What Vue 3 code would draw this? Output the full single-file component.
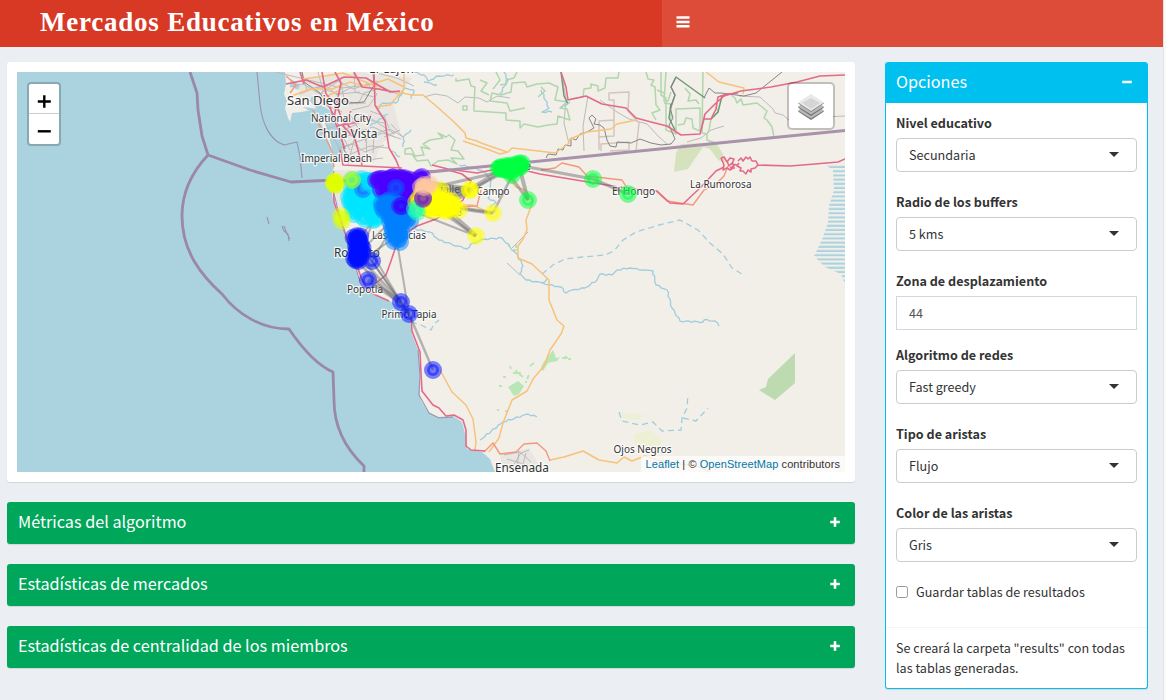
<script setup>
import { ref } from 'vue'

const fields = ref([
  { label: 'Nivel educativo', value: 'Secundaria', type: 'select' },
  { label: 'Radio de los buffers', value: '5 kms', type: 'select' },
  { label: 'Zona de desplazamiento', value: '44', type: 'text' },
  { label: 'Algoritmo de redes', value: 'Fast greedy', type: 'select' },
  { label: 'Tipo de aristas', value: 'Flujo', type: 'select' },
  { label: 'Color de las aristas', value: 'Gris', type: 'select' },
])
const panels = ['Métricas del algoritmo', 'Estadísticas de mercados', 'Estadísticas de centralidad de los miembros']

const places = [
  ['San Diego', 287, 105, 62, 12.9],
  ['National City', 311, 121.5, 60, 10.2],
  ['Chula Vista', 315.5, 138, 62, 12.3],
  ['Imperial Beach', 301, 162, 71, 10.2],
  ['Rosarito', 334, 257, 46, 12],
  ['Las Delicias', 372, 239, 54, 10],
  ['Popotla', 347, 292.5, 36, 10.2],
  ['Primo Tapia', 381.5, 318, 55, 10.3],
  ['Tecate', 495, 170, 36, 12],
  ['El Refugio', 422, 216, 40, 9.5],
  ['Valle', 437, 193, 23, 10],
  ['Campo', 476.5, 195, 33, 10.2],
  ['El Hongo', 612, 194.5, 43, 10.2],
  ['La Rumorosa', 690, 187.5, 61.5, 10.2],
  ['Ojos Negros', 613.5, 453, 58, 10.2],
  ['Ensenada', 495, 471.5, 54, 12],
  ['El Cajon', 369, 72.7, 45, 12],
]

const greys = [
  'M275 72 342 88 375 84 402 96M290 87 303 84 320 94 338 81 353 89 378 81M302 72 307 90 325 85 337 95 356 85M318 72 323 90 320 103 342 112M340 78 345 104 366 103M354 72 355 92 374 97M300 94 317 87 339 94 360 92M377 73 397 78 414 86M365 82 377 94 369 106 352 110',
  'M325 122 341 151M333 119 350 150M343 116 359 149M351 116 367 143M337 133 370 118 395 134M339 139 373 127 395 137M342 147 383 133 401 139M346 156 370 146 388 148M325 129 363 119 384 123M354 140 348 164M366 135 367 163M374 132 373 153M384 137 400 130M391 124 403 137',
  'M325 93 330 101 346 101 358 104 364 93 384 87M340 120 349 132 363 130 374 134 390 129 403 137M338 149 353 144 365 152 384 145M345 157 367 160 383 158M370 111 384 116 389 128',
  'M424 97 435 94 447 96 458 103 465 97 479 98 487 102 497 96 510 98M563 82 566 99 564 123 569 144M588 96 583 126 584 151M600 100 617 112 629 119 647 124 659 137 667 144M687 142 701 138 711 130 724 126M739 96 760 97 773 109 775 113 783 115 790 121 804 122M824 117 845 116',
  'M507 263 520 275M528 232 512 248M504 455 520 452 531 462M513 466 521 453 529 450M507 459 537 468M519 451 517 469M526 453 521 471',
]
const reds = [
  'M286 84 306 80 323 87 344 77 366 78 390 92 400 91M300 72 304 84M322 72 326 94 337 106 341 117 354 132M335 72 341 83 337 102 334 118M354 72 362 87 378 89 393 92M374 72 375 105 378 110 385 121 387 135 389 148 396 160 400 170M319 97 330 107 336 124 345 149M351 111 343 126 355 139 362 165M336 126 354 123 372 115M340 150 343 165 402 168',
  'M333 181 334 202 341 222 348 242 355 260 362 280 369 292 389 301M376 283 386 275 391 261 396 246 404 235 417 226 436 219 453 208 463 200 471 181 462 174 448 170 427 171M432 165 448 169 477 173 492 170 511 167 540 174 576 180 619 187 657 191 670 203 683 204 701 187 716 171 724 167',
  'M561 72 566 87 568 100 586 96 602 104 626 108 636 118 655 123 667 126 681 135 700 134 705 114 715 104 724 96 741 91 771 87 797 82 820 76 845 75M700 134 704 119 711 119 716 109 718 97 727 94 738 93',
  'M411 318 412 331 420 352 421 373 422 391 433 405 439 408 446 416 454 415 463 420 466 430 466 446 471 450 485 451',
  'M757 165 790 166 815 164 838 162 845 159M721 158 724 157 727 162 730 158 734 159 732 164 737 165M738 161 741 158 743 161 746 157 748 159 750 157 752 161 756 161 758 165 755 168 751 169 751 172 748 170 746 174 743 171 740 171 741 168 737 166 739 163M721 158 724 165 723 170 727 168 730 170 733 168 735 168M727 161 729 166 732 163 734 166 730 168',
]
const oranges = [
  'M392 91 412 95 423 95 435 105 453 121 465 133 466 138 477 141 481 143 507 152',
  'M292 96 310 89 332 89 350 82 366 86 388 79 404 87M302 79 325 76 343 73 378 87M321 99 338 91M404 72 404 89 390 105 375 107',
  'M463 141 487 149 500 154 508 152 512 148 530 150 555 153 568 144 570 139 587 132 611 129 617 124 636 120',
  'M706 72 719 82 744 88 743 94M463 205 473 205 489 213M508 178 516 187 525 190 533 201 529 212 526 220 527 230 523 239 518 246 518 258 532 264 549 280 549 300 557 320 564 326 561 334 550 350 544 366 533 379 527 391 512 400 503 423 499 438 489 452',
  'M440 370 452 392 466 405 473 419 476 442 475 450M550 460 564 457 583 451 599 460 617 463 624 457 632 461 645 456 657 460 700 467 710 472',
]
// Adds small bends to an absolute polyline path, so that rivers meander
function meander(d) {
  return d.split('M').filter(Boolean).map((part) => {
    const n = part.trim().split(/\s+/).map(Number)
    let out = `M${n[0]} ${n[1]}`
    let k = n[0]
    for (let i = 2; i < n.length; i += 2) {
      const x0 = n[i - 2], y0 = n[i - 1], x1 = n[i], y1 = n[i + 1]
      const len = Math.hypot(x1 - x0, y1 - y0)
      const steps = Math.max(1, Math.round(len / 3))
      for (let s = 1; s < steps; s++) {
        k++
        const off = Math.sin(k * 2.3) * 0.8
        const t = s / steps
        out += ` ${(x0 + (x1 - x0) * t - (y1 - y0) / len * off).toFixed(1)} ${(y0 + (y1 - y0) * t + (x1 - x0) / len * off).toFixed(1)}`
      }
      out += ` ${x1} ${y1}`
    }
    return out
  }).join('')
}
const waters = [
  'M377 110 383 103 396 103 405 88 414 90M370 126 388 114M403 147 404 136 411 130M400 157 392 151M411 99 414 90M414 72 424 75 428 81 439 76 454 75',
  'M424 82 437 85M459 165 476 168 484 172 490 178 491 190 495 192M492 190 488 198 496 202 490 208',
  'M415 229 430 232 439 240 457 246 467 249 473 243 485 239 502 238 510 247 518 256 523 266 520 273 526 280 542 283 547 279',
  'M540 282 549 285 561 287 566 293 572 290 585 288 597 280 600 274 612 275 617 270 630 268 643 270 653 271 656 285 667 290 672 308 680 321 703 322 704 320 715 321 719 326',
  'M480 440 503 422 528 414 537 417M541 90 549 108 542 112 552 112M561 108 570 102M504 72 508 80 500 94',
].map(meander)
const dashed = [
  'M542 274 553 265 565 259 582 257 605 255 614 251 623 240 636 232 659 225 680 220 698 230 710 243 723 254 732 268 742 274',
  'M411 322 421 325 431 330 434 324 439 320',
  'M619 412 622 421 640 425 653 422 662 431 681 430 682 418 687 408 688 394M683 418 696 421 708 408',
]
const greens = [
  'M405 149 411 148 415 156 424 155 421 147 430 149 423 144 430 140 443 138 438 133 446 137 449 135 455 140 451 150 458 151 464 159 451 158 457 164 448 160 438 161 431 166 428 160 417 161 412 154 405 154Z',
  'M456 78 456 81 469 79 471 86 475 87 474 103 474 111 506 113 506 120 520 121 520 128 524 124 538 127 548 125 557 124 558 116 570 120 567 109 560 108 567 102 555 100 558 87 549 83 537 84 527 87 525 82 512 83 511 92 501 95 492 93 490 101 507 103 510 111 525 108',
  'M500 85 506 84 506 80 514 78 517 72M496 72 500 80 493 89M570 99 583 97 584 89 591 88 591 84 598 86 598 91 605 88 606 78 618 78 619 72M646 72 648 79 654 80 651 85 655 87 656 105 660 110 652 113 656 120M661 72 661 95 666 98 666 130 676 134 676 109 700 108 700 131 693 128 692 119 686 118 684 124 678 125',
  'M666 72 664 101 668 101 671 92M703 72 702 133 707 134M685 88 690 94 688 101 696 100 699 104M657 90 664 93 M664 103 671 104 671 120',
  'M707 134 707 140 715 143 774 137 772 127 767 120 764 118 767 111 757 103 743 105 741 99 737 103 735 98 731 95M716 106 718 112 711 119 709 130 707 134',
  'M480 80 487 83 481 91 489 95M538 97 545 91 541 87M463 106h4v4h-4Z',
]

// Sunflower spread used for the dense groups of schools
function scatter(color, cx, cy, rx, ry, n) {
  const out = []
  for (let i = 0; i < n; i++) {
    const a = i * 2.39996
    const r = Math.sqrt((i + 0.5) / n)
    out.push([cx + Math.cos(a) * r * rx, cy + Math.sin(a) * r * ry, color])
  }
  return out
}
const markers = [
  [362, 216, '#00e5ff'], [365, 219, '#00e5ff'], [373, 220, '#00e5ff'], [378, 216, '#00e5ff'], [372, 214, '#00e5ff'], [375, 219, '#00e5ff'],
  ...scatter('#00e5ff', 357, 200, 7, 12, 16),
  ...scatter('#00e5ff', 363, 187, 12, 9, 20),
  ...scatter('#00e5ff', 370, 202, 15, 9, 20),
  [349, 197, '#00e5ff'], [350, 202, '#00e5ff'], [354, 214, '#00e5ff'],
  [363, 189, '#2060ff'], [371, 184, '#00e5ff'], [367, 181, '#00e5ff'],
  ...scatter('#4c00ff', 378, 179, 3, 2, 2),
  ...scatter('#4c00ff', 397, 187, 14, 11, 34),
  ...scatter('#4c00ff', 395, 180, 17, 3, 18),
  ...scatter('#4c00ff', 405, 201, 6, 9, 9),
  [381, 190, '#4c00ff'], [420, 178, '#4c00ff'], [422, 177, '#4c00ff'],
  ...scatter('#0080ff', 398, 216, 10, 10, 24),
  ...scatter('#0080ff', 390, 206, 11, 6, 17),
  ...scatter('#0080ff', 397, 231, 6, 8, 13),
  [394, 241, '#0080ff'], [400, 242, '#0080ff'], [396, 188, '#0060ff'], [410, 221, '#0080ff'],
  [400, 206, '#4c00ff'], [402, 206, '#3000ff'],
  ...scatter('#ffff00', 437, 204, 17, 7, 30),
  ...scatter('#ffff00', 448, 207, 8, 5, 8),
  ...scatter('#ffff00', 427, 199, 13, 9, 12),
  [441, 190, '#ffff00'], [470, 190, '#ffff00'], [470, 190, '#ffff00'], [459, 210, '#ffff00'], [493, 213, '#ffff00'], [476, 236, '#ffff00'],
  [417, 212, '#20ffb0'], [415, 209, '#20ffb0'],
  [423, 198, '#4c00ff'], [422, 181, '#4c00ff'],
  [424, 185, '#ffc8a0'], [427, 188, '#ffc8a0'], [421, 187, '#ffc8a0'], [430, 184, '#ffc8a0'],
  [423, 199, '#7a30aa'], [424, 187, '#ffc8a0'],
  ...scatter('#e0ff00', 335, 183, 1.5, 3, 5),
  [341, 216, '#e0ff00'], [342, 221, '#e0ff00'],
  [352, 180, '#40e0a0'], [352, 180, '#b0ff20'],
  ...scatter('#0010ff', 357, 238, 4, 3, 6),
  ...scatter('#0010ff', 359, 250, 4, 9, 16),
  ...scatter('#0010ff', 357, 259, 3, 3, 5),
  [372, 261, '#0010ff'], [368, 280, '#0010ff'], [401, 302, '#0010ff'], [409, 314, '#0010ff'], [433, 370, '#0010ff'],
  ...scatter('#00ff40', 500, 168, 3, 1, 4),
  ...scatter('#00ff40', 508, 168, 7, 3, 12),
  ...scatter('#00ff40', 519, 165, 4, 3, 7),
  [512, 175, '#00ff40'], [528, 200, '#00ff40'], [593, 179, '#00ff40'], [628, 194, '#00ff40'],
]
const edges = [
  [358, 256, 401, 302, 3], [362, 248, 401, 302, 2], [372, 261, 409, 314, 2], [368, 280, 401, 302, 5], [358, 262, 409, 314, 3], [364, 240, 401, 302, 2],
  [397, 242, 409, 314, 2], [409, 314, 433, 370, 2.5], [401, 302, 409, 314, 3],
  [360, 252, 392, 220, 2], [362, 260, 397, 236, 2], [372, 261, 393, 226, 2], [358, 238, 380, 215, 2], [366, 240, 374, 218, 2],
  [440, 204, 476, 236, 5], [425, 200, 476, 236, 3], [415, 212, 476, 236, 2], [450, 207, 493, 213, 4], [437, 205, 493, 213, 2],
  [423, 183, 470, 190, 6], [440, 205, 470, 190, 8], [435, 195, 470, 190, 10], [430, 188, 500, 172, 3],
  [470, 190, 503, 169, 5], [476, 187, 512, 168, 3], [493, 213, 513, 174, 2.5], [519, 166, 528, 200, 4], [505, 169, 528, 200, 3],
  [517, 165, 593, 179, 3], [593, 179, 628, 194, 3],
]
</script>

<template>
  <div class="page">
    <header class="topbar">
      <div class="brand">Mercados Educativos en México</div>
      <nav class="nav">
        <svg class="burger" width="14" height="12" viewBox="0 0 14 12"><path d="M.5 1.5h13M.5 6h13M.5 10.3h13" /></svg>
      </nav>
    </header>

    <main class="content">
      <section class="left">
        <div class="box mapbox">
          <div class="map">
            <svg class="tiles" viewBox="17 72 828 400" width="828" height="400">
              <defs>
                <pattern id="hatch" width="6" height="4.2" y="165.5" patternUnits="userSpaceOnUse"><path d="M0 1.5H6" stroke="#aad3df" stroke-width="2" /></pattern>
              </defs>
              <rect x="17" y="72" width="828" height="400" fill="#aad3df" />
              <path class="land" d="M285 72 286 84 284 94 287 101 285 108 288 118 290 122 292 113 301 112 312 110 319 118 325 132 330 145 333 159 334 167 331 178 332 195 338 217 346 239 353 258 359 281 368 293 380 297 392 302 403 309 410 320 412 334 418 350 420 375 419 390 421 401 428 412 437 417 453 416 462 422 466 437 467 449 482 452 490 459 495 472H845V72Z" />
              <path class="urban" d="M297 80 360 72 412 78 393 103 400 130 381 144 374 163 341 163 330 129 318 104 300 99ZM334 170 385 170 421 183 409 211 370 227 337 205ZM500 455 529 448 542 471 503 471Z" />
              <path class="bay" d="M312 96 318 104 328 109 334 116 336 127 341 139 343 155 334 163 331 145 324 119 316 108 310 101ZM291 79 300 85 298 90 290 86ZM303 107 319 109 322 118 313 113Z" />
              <path class="field" d="M681 144 707 143 715 141 723 154 725 163 718 160 710 149 703 147 688 169 674 172 676 153Z" />
              <path class="olive" d="M620 412 645 415 638 420 624 419ZM634 434 650 430 664 441 655 451 635 446Z" />
              <path class="park" d="M759 390 766 387 768 379 795 353V383L775 400Z" />
              <path class="grove" d="M508 387 518 381 524 386 519 394 514 396ZM543 363 553 350 556 358 560 357 557 361 548 363 543 371 541 368Z" />
              <path class="shrubs" d="M510 366l1 3M503 377h3M499 386h3M513 373h8M517 370l-2 4M519 374l4 3M527 379l2-4M525 382h2M530 366l4-3M562 358h5l-2-2M568 359h3M498 409v2M505 411h2M509 244v3M513 250h4M516 244v4" />
              <path fill="url(#hatch)" d="M826 165H845V284L841 274 825 267 814 256 822 240 828 223 829 206 834 190 833 170Z" />

              <path v-for="d in greys" :key="d" :d="d" class="grey" />
              <path v-for="d in greens" :key="d" :d="d" class="green" />
              <path class="green dark" d="M670 110 675 95 671 87 676 77 705 98M671 104 669 118 675 130M722 96 718 112 711 119M561 72 564 96 568 104" />
              <path v-for="d in waters" :key="d" :d="d" class="water" />
              <path v-for="d in dashed" :key="d" :d="d" class="water dash" />
              <path class="brown" d="M610 151 629 150 629 142 601 144 601 151M599 150 599 121 614 120 614 100 609 100 609 93 629 92 628 111 639 123 636 151M598 137 614 136 614 120" />
              <path class="rail" d="M546 158 548 154 556 155 558 149 563 150 565 145 571 146 571 138 576 140 580 134 587 132 594 128 589 118 592 115 596 119 594 124 600 125 604 128 607 140 610 146 616 147 617 142 631 143 640 139 651 143 661 145 671 144 675 139 669 125 673 118 670 108 675 95 671 87 676 77M704 98 709 88 715 93 721 93 744 96 756 93 782 72M302 72 304 82 320 93 326 103 335 116 340 130 344 150 353 163M373 72 374 85 364 102 349 103" />
              <path v-for="d in oranges" :key="d" :d="d" class="orange" />
              <path class="coral" d="M313 110 322 131 332 151 334 167M286 76 296 85 290 93M541 170 555 168 562 163 579 167 587 176 622 180 627 188M656 191 667 201 693 205 704 190 716 184 724 176 728 166M484 452 493 443 500 454 516 452 524 444 537 443 546 451 550 461M448 207 477 206 481 190" />
              <path v-for="d in reds" :key="d" :d="d" class="red" />
              <path class="border" d="M190 72 197 93 198 110 202 136 208 155 250 170 291 182 335 180M208 155C192 172 182 192 182 216C182 252 202 276 222 294C238 315 262 329 289 329C304 351 319 366 333 372L334 400C334 430 347 450 364 466V472" />
              <path class="border frontier" d="M335 181.5 845 130.5" />
              <path class="thin" d="M257 72 260 104C262 122 269 140 284 145L297 142 300 157 302 178M267 217 269 224M282 226l2 5 4 3 1 7M284 226l3 8 3 5M418 350 420 375 419 395 429 413 439 418 453 417M334 171 331 181 337 206 350 248 360 282" />

              <text v-for="p in places" :key="p[0]" class="place" :x="p[1]" :y="p[2]" :textLength="p[3]" lengthAdjust="spacingAndGlyphs" :font-size="p[4]">{{ p[0] }}</text>

              <line v-for="(e, i) in edges" :key="'e' + i" class="edge" :x1="e[0]" :y1="e[1]" :x2="e[2]" :y2="e[3]" :stroke-width="e[4]" />
              <circle v-for="(m, i) in markers" :key="'m' + i" class="marker" :cx="m[0]" :cy="m[1]" r="6" :fill="m[2]" :stroke="m[2]" />
            </svg>

            <div class="zoomer">
              <button type="button" aria-label="Acercar"><svg width="14" height="14" viewBox="0 0 14 14"><path d="M.8 7.5h13M7.3 1.2v12.6" /></svg></button>
              <button type="button" aria-label="Alejar"><svg width="14" height="14" viewBox="0 0 14 14"><path d="M.8 7.3h13" /></svg></button>
            </div>
            <div class="layers">
              <svg width="26" height="26" viewBox="0 0 26 26">
                <path d="M0 17.5 13 9l13 8.5L13 26Z" fill="#747474" /><path d="M0 16.5 13 8l13 8.5L13 24.5Z" fill="#b9b9b9" />
                <path d="M0 13.5 13 5l13 8.5L13 22Z" fill="#747474" /><path d="M0 12.5 13 4l13 8.5L13 20.5Z" fill="#b9b9b9" />
                <path d="M0 9.3 13 .7l13 8.6L13 18Z" fill="#848484" /><path d="M0 8.5 13 0l13 8.5L13 17Z" fill="#e9e9e9" /><path d="M4 9 13 4l9 5-9 6Z" fill="#d5d5d5" />
              </svg>
            </div>
            <div class="credit"><a>Leaflet</a> | © <a>OpenStreetMap</a> contributors</div>
          </div>
        </div>

        <div v-for="p in panels" :key="p" class="box panel">
          <h3>{{ p }}</h3>
          <svg width="10" height="10" viewBox="0 0 10 10"><path d="M.2 5h9.6M5 .2v9.6" /></svg>
        </div>
      </section>

      <aside class="options">
        <div class="options-head">
          <h3>Opciones</h3>
          <svg width="10" height="10" viewBox="0 0 10 10"><path d="M.2 5h9.6" /></svg>
        </div>
        <div class="options-body">
          <div v-for="f in fields" :key="f.label" class="group" :class="f.type">
            <label>{{ f.label }}</label>
            <div class="control">
              <span>{{ f.value }}</span>
              <i v-if="f.type === 'select'" class="caret"></i>
            </div>
          </div>
          <div class="check"><span class="tick"></span>Guardar tablas de resultados</div>
        </div>
        <div class="options-foot">Se creará la carpeta "results" con todas<br />las tablas generadas.</div>
      </aside>
    </main>
  </div>
</template>

<style>
body { background: #fafafa; overflow: hidden; }
</style>

<style scoped>
* { box-sizing: border-box; }
.page {
  width: 1164px; height: 700px; overflow: hidden;
  background: #ebeef3;
  border-right: 1px solid #e3e4e6;
  font-family: "Noto Sans CJK SC", "Noto Sans", sans-serif;
  font-size: 12.6px; line-height: 20px; color: #333;
}
.topbar { display: flex; height: 47px; background: #dd4b39; }
.brand {
  width: 662px; padding-left: 40px; background: #d73925; color: #fff;
  font: bold 27px/45px Georgia, "Liberation Serif", serif;
  letter-spacing: .77px; white-space: nowrap;
}
.nav { padding: 16px 0 0 14px; }
.burger { display: block; }
.burger path { stroke: #fff; stroke-width: 2.4; }
.content { display: flex; align-items: flex-start; justify-content: space-between; padding: 15px 15px 0 7px; }
.left { display: flex; flex-direction: column; gap: 20px; width: 848px; }
.box { border-radius: 3px; box-shadow: 0 1px 1px rgba(0, 0, 0, .1); }
.mapbox { padding: 10px; background: #fff; }
.map { position: relative; width: 828px; height: 400px; overflow: hidden; }
.tiles { display: block; }
.tiles path { stroke-linejoin: round; }
.land { fill: #f2efe9; }
.urban { fill: #e9e6e2; }
.bay { fill: #aad3df; }
.field { fill: #d5e2bd; }
.olive { fill: #eef0d5; }
.park { fill: #bddab1; }
.grove { fill: #b9e6b5; }
.shrubs { fill: none; stroke: #b9e6b5; stroke-width: 2; }
.grey { fill: none; stroke: #bbb; stroke-width: 1; }
.green { fill: none; stroke: #b0d6ac; stroke-width: 1.5; }
.green.dark { stroke: #6f9a78; stroke-width: 1.5; }
.water { fill: none; stroke: #a0cddd; stroke-width: 1.3; }
.dash { stroke-dasharray: 6 4; }
.brown { fill: none; stroke: #d4c5bb; stroke-width: 1.5; }
.rail { fill: none; stroke: #858585; stroke-width: 1; }
.orange { fill: none; stroke: #f7c27a; stroke-width: 1.5; }
.coral { fill: none; stroke: #f6977a; stroke-width: 1.4; }
.red { fill: none; stroke: #e46a88; stroke-width: 1.6; }
.border { fill: none; stroke: #9b87a9; stroke-width: 2.8; }
.frontier { stroke: #a992ac; stroke-width: 3; }
.thin { fill: none; stroke: #9b91b1; stroke-width: 1.1; }
.place {
  fill: #333; stroke: #fff; stroke-opacity: .75; stroke-width: 2.5; paint-order: stroke;
  font-family: "Noto Sans", sans-serif;
}
.edge { stroke: #666; stroke-opacity: .45; }
.marker { fill-opacity: .5; stroke-opacity: .5; stroke-width: 6; }
.zoomer {
  position: absolute; left: 10px; top: 10px; width: 34px; height: 64px;
  border: 2px solid rgba(0, 0, 0, .2); border-radius: 4px; background: #fff; background-clip: padding-box;
}
.zoomer button { display: flex; align-items: center; justify-content: center; width: 30px; height: 30px; padding: 4px 0 0; border: 0; background: none; }
.zoomer button:first-child { border-bottom: 1px solid #ccc; }
.zoomer path { stroke: #000; stroke-width: 2.4; }
.layers {
  position: absolute; right: 10px; top: 10px; width: 48px; height: 48px; padding: 10px 9px;
  border: 2px solid rgba(0, 0, 0, .2); border-radius: 5px; background: #fff; background-clip: padding-box;
}
.layers svg { display: block; }
.credit {
  position: absolute; right: 0; bottom: 0; height: 16px; padding: 0 5px; white-space: nowrap;
  background: rgba(255, 255, 255, .7); font: 11px/16px "Liberation Sans", Arial, sans-serif; letter-spacing: .08px;
}
.credit a { color: #0078a8; }
.panel { display: flex; justify-content: space-between; height: 42px; padding: 0 16px 0 11px; background: #00a65a; }
.panel h3, .options-head h3 { margin: 0; font-size: 16.2px; line-height: 38px; font-weight: 400; color: #fff; }
.panel svg { margin: 14.5px -.5px 0 0; }
.panel path, .options-head path { stroke: #fff; stroke-width: 2.6; }
.options {
  width: 263px; height: 627px; border: 1px solid #00c0ef; border-top: 0; border-radius: 3px;
  background: #fff; box-shadow: 0 1px 1px rgba(0, 0, 0, .1); overflow: hidden;
}
.options-head { display: flex; justify-content: space-between; height: 41px; padding: 0 15px 0 10px; background: #00c0ef; }
.options-head svg { margin-top: 14.5px; }
.options-body { height: 524px; padding: 10px; }
.group { margin-bottom: 20px; }
.group.text { margin-bottom: 15px; }
.group label { display: block; height: 20px; margin-bottom: 5px; font-weight: 700; }
.control {
  display: flex; align-items: center; justify-content: space-between; height: 34px; padding: 0 17px 0 12px;
  border: 1px solid #ccc; border-radius: 4px;
}
.text .control { border-color: #d2d6de; border-radius: 0; color: #555; }
.caret { border: 5px solid transparent; border-top-color: #333; border-bottom: 0; margin-top: -2px; }
.check { display: flex; align-items: center; gap: 8px; height: 20px; }
.tick { width: 12px; height: 12px; border: 1px solid #999; border-radius: 2.5px; }
.options-foot { height: 61px; padding: 10px; border-top: 1px solid #f4f4f4; }
</style>
